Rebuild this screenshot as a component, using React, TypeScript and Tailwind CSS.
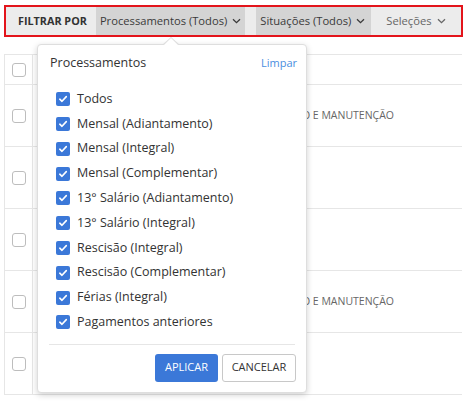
import React from "react";

const items = [
  "Todos",
  "Mensal (Adiantamento)",
  "Mensal (Integral)",
  "Mensal (Complementar)",
  "13° Salário (Adiantamento)",
  "13° Salário (Integral)",
  "Rescisão (Integral)",
  "Rescisão (Complementar)",
  "Férias (Integral)",
  "Pagamentos anteriores",
];

function Chevron({ className = "" }: { className?: string }) {
  return (
    <svg width="9" height="6" viewBox="0 0 9 6" className={className} fill="none">
      <path d="M1 1.2 L4.5 4.6 L8 1.2" stroke="currentColor" strokeWidth="1.3" />
    </svg>
  );
}

function EmptyBox() {
  return <div className="w-[14px] h-[14px] rounded-[3px] border border-[#bdbdbd] bg-white" />;
}

function CheckedBox() {
  return (
    <div className="w-[14px] h-[14px] rounded-[2px] bg-[#3b78d8] flex items-center justify-center">
      <svg width="10" height="10" viewBox="0 0 10 10" fill="none">
        <path d="M1.8 5.2 L4 7.3 L8.3 2.6" stroke="white" strokeWidth="1.6" strokeLinecap="round" strokeLinejoin="round" />
      </svg>
    </div>
  );
}

const rows = [
  { text: true },
  { text: false },
  { text: false },
  { text: true },
  { text: false },
];

export default function App() {
  return (
    <div
      className="relative w-[467px] h-[401px] bg-white overflow-hidden text-[#333]"
      style={{ fontFamily: '"Open Sans", "Noto Sans", sans-serif' }}
    >
      {/* filter bar */}
      <div className="mt-[5px] ml-[4px] w-[459px] h-[32px] border-2 border-[#e3141b] bg-[#ececec] flex items-stretch whitespace-nowrap">
        <div className="pl-[12px] pr-[9px] flex items-center text-[10.8px] font-bold text-[#333]">FILTRAR POR</div>
        <div className="bg-[#d4d4d4] px-[4px] flex items-center gap-[5px] text-[11.2px] text-[#3a3a3a]">
          <span>Processamentos (Todos)</span>
          <Chevron />
        </div>
        <div className="ml-[11px] bg-[#d4d4d4] pl-[4px] pr-[6px] flex items-center gap-[5px] text-[11.2px] text-[#3a3a3a]">
          <span>Situações (Todos)</span>
          <Chevron />
        </div>
        <div className="ml-[11px] px-[4px] flex items-center gap-[5px] text-[11.2px] text-[#666]">
          <span>Seleções</span>
          <Chevron />
        </div>
      </div>

      {/* table */}
      <div className="mt-[17px] ml-[4px] w-[458px] border-t border-l border-[#e6e6e6]">
        <div className="h-[30px] flex border-b border-[#e6e6e6]">
          <div className="w-[28px] border-r border-[#e6e6e6] flex items-center justify-center">
            <EmptyBox />
          </div>
          <div className="flex-1" />
        </div>
        {rows.map((r, i) => (
          <div key={i} className="h-[62px] flex border-b border-[#e6e6e6]">
            <div className="w-[28px] border-r border-[#e6e6e6] flex items-center justify-center">
              <EmptyBox />
            </div>
            <div className="flex-1 flex items-center justify-end pr-[68px]">
              {r.text && (
                <span className="text-[10.5px] text-[#666] whitespace-nowrap">
                  INSTALAÇÃO E MANUTENÇÃO
                </span>
              )}
            </div>
          </div>
        ))}
      </div>

      {/* popover */}
      <div className="absolute left-[37px] top-[44px] w-[270px] h-[349px] bg-white border border-[#dedede] rounded-[4px] shadow-[0_2px_6px_rgba(0,0,0,0.18)]">
        {/* caret */}
        <div className="absolute left-[124px] -top-[8px] w-0 h-0 border-l-[9px] border-r-[9px] border-b-[8px] border-l-transparent border-r-transparent border-b-[#dedede]" />
        <div className="absolute left-[125px] -top-[7px] w-0 h-0 border-l-[8px] border-r-[8px] border-b-[8px] border-l-transparent border-r-transparent border-b-white" />

        <div className="pl-[12px] pr-[9px] pt-[9px] flex items-center justify-between">
          <span className="text-[12.5px] text-[#333]">Processamentos</span>
          <span className="text-[11px] text-[#4a8ee0]">Limpar</span>
        </div>
        <div className="mt-[14px] pl-[18px] flex flex-col">
          {items.map((it) => (
            <div key={it} className="h-[24.8px] flex items-center gap-[7px]">
              <CheckedBox />
              <span className="text-[12.5px] text-[#333] whitespace-nowrap">{it}</span>
            </div>
          ))}
        </div>
        <div className="mx-[11px] mt-[9px] border-t border-[#e6e6e6]" />
        <div className="mt-[9px] pr-[10px] flex justify-end gap-[4px]">
          <button className="w-[63px] h-[28px] rounded-[3px] bg-[#3b78d8] text-white text-[11px]">APLICAR</button>
          <button className="w-[74px] h-[28px] rounded-[3px] bg-white border border-[#c8c8c8] text-[#333] text-[11px]">CANCELAR</button>
        </div>
      </div>
    </div>
  );
}
